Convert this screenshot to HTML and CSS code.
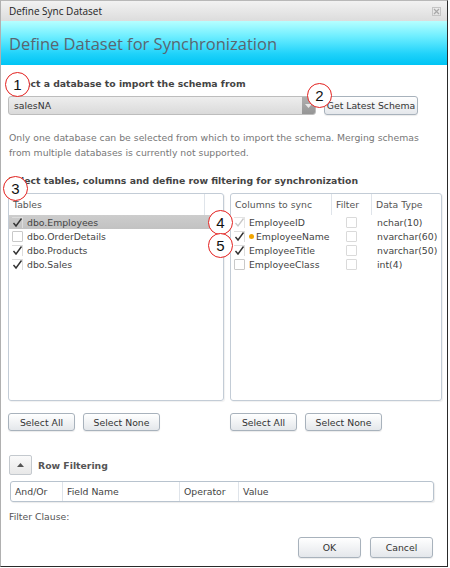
FILE: index.html
```html
<!DOCTYPE html>
<html>
<head>
<meta charset="utf-8">
<link rel="stylesheet" href="styles.css">
</head>
<body>
<div class="dialog">
  <div class="titlebar">
    <span class="title">Define Sync Dataset</span>
    <svg class="close" width="9" height="9" viewBox="0 0 9 9"><rect x="0.5" y="0.5" width="8" height="8" fill="none" stroke="#c4c4c4"/><path d="M2 2 L7 7 M7 2 L2 7" stroke="#a8a8a8" stroke-width="1.2"/></svg>
  </div>
  <div class="banner">Define Dataset for Synchronization</div>
  <div class="content">
    <div class="label l1">Select a database to import the schema from</div>
    <div class="db-row">
      <div class="select"><span class="select-text">salesNA</span><span class="arrow"><svg width="7" height="4" viewBox="0 0 7 4"><path d="M0 0 H7 L3.5 4 Z" fill="#e8e8e8"/></svg></span></div>
      <button class="btn schema-btn">Get Latest Schema</button>
    </div>
    <p class="desc">Only one database can be selected from which to import the schema. Merging schemas<br>from multiple databases is currently not supported.</p>
    <div class="label l2">Select tables, columns and define row filtering for synchronization</div>
    <div class="panels">
      <div class="panel">
        <div class="phead tables-head">
          <span class="hcell tcol">Tables</span>
          <span class="hcell tpad"></span>
        </div>
        <div class="prow selected"><span class="cb on"><svg width="11" height="11" viewBox="0 0 11 11"><path d="M1.5 6 L4 9 L9.5 1.5" fill="none" stroke="#333" stroke-width="1.4"/></svg></span><span class="rtext">dbo.Employees</span></div>
        <div class="prow"><span class="cb box"></span><span class="rtext">dbo.OrderDetails</span></div>
        <div class="prow"><span class="cb on"><svg width="11" height="11" viewBox="0 0 11 11"><path d="M1.5 6 L4 9 L9.5 1.5" fill="none" stroke="#333" stroke-width="1.4"/></svg></span><span class="rtext">dbo.Products</span></div>
        <div class="prow"><span class="cb on"><svg width="11" height="11" viewBox="0 0 11 11"><path d="M1.5 6 L4 9 L9.5 1.5" fill="none" stroke="#333" stroke-width="1.4"/></svg></span><span class="rtext">dbo.Sales</span></div>
      </div>
      <div class="panel">
        <div class="phead cols-head">
          <span class="hcell c1">Columns to sync</span>
          <span class="hcell c2">Filter</span>
          <span class="hcell c3">Data Type</span>
        </div>
        <div class="crow">
          <span class="c1 cell"><span class="cb on dis"><svg width="11" height="11" viewBox="0 0 11 11"><path d="M1.5 6 L4 9 L9.5 1.5" fill="none" stroke="#c8c8c8" stroke-width="1.3"/></svg></span><span class="rtext">EmployeeID</span></span>
          <span class="c2 cell"><span class="cb box light"></span></span>
          <span class="c3 cell">nchar(10)</span>
        </div>
        <div class="crow">
          <span class="c1 cell"><span class="cb on"><svg width="11" height="11" viewBox="0 0 11 11"><path d="M1.5 6 L4 9 L9.5 1.5" fill="none" stroke="#333" stroke-width="1.4"/></svg></span><span class="dot"></span><span class="rtext">EmployeeName</span></span>
          <span class="c2 cell"><span class="cb box light"></span></span>
          <span class="c3 cell">nvarchar(60)</span>
        </div>
        <div class="crow">
          <span class="c1 cell"><span class="cb on"><svg width="11" height="11" viewBox="0 0 11 11"><path d="M1.5 6 L4 9 L9.5 1.5" fill="none" stroke="#333" stroke-width="1.4"/></svg></span><span class="rtext">EmployeeTitle</span></span>
          <span class="c2 cell"><span class="cb box light"></span></span>
          <span class="c3 cell">nvarchar(50)</span>
        </div>
        <div class="crow">
          <span class="c1 cell"><span class="cb box"></span><span class="rtext">EmployeeClass</span></span>
          <span class="c2 cell"><span class="cb box light"></span></span>
          <span class="c3 cell">int(4)</span>
        </div>
      </div>
      <div class="btn-row">
        <button class="btn sel-all">Select All</button>
        <button class="btn sel-none">Select None</button>
      </div>
      <div class="btn-row">
        <button class="btn sel-all">Select All</button>
        <button class="btn sel-none">Select None</button>
      </div>
    </div>
    <div class="rf">
      <span class="toggle"><svg width="7" height="4" viewBox="0 0 7 4"><path d="M0 4 H7 L3.5 0 Z" fill="#555"/></svg></span>
      <span class="rf-label">Row Filtering</span>
    </div>
    <div class="fgrid">
      <span class="fcell f1">And/Or</span>
      <span class="fcell f2">Field Name</span>
      <span class="fcell f3">Operator</span>
      <span class="fcell f4">Value</span>
    </div>
    <div class="fclause">Filter Clause:</div>
    <div class="footer">
      <button class="btn fbtn">OK</button>
      <button class="btn fbtn">Cancel</button>
    </div>
  </div>
  <span class="callout k1">1</span>
  <span class="callout k2">2</span>
  <span class="callout k3">3</span>
  <span class="callout k4">4</span>
  <span class="callout k5">5</span>
</div>
</body>
</html>
```
FILE: styles.css
```css
* { box-sizing: border-box; }
html, body { margin: 0; padding: 0; background: #fff; }
body { font-family: "DejaVu Sans", Verdana, sans-serif; font-size: 9.3px; color: #444; }

.dialog {
  position: relative;
  width: 448px;
  height: 567px;
  border-left: 1px solid #b0b0b0;
  border-right: 1px solid #2a2a2a;
  border-bottom: 1px solid #2a2a2a;
  border-top: 1px solid #b8b8b8;
  background: #fff;
  overflow: hidden;
}

.titlebar {
  height: 20px;
  background: linear-gradient(#f2f2f2, #dcdcdc);
  display: flex;
  align-items: center;
  justify-content: space-between;
  padding: 0 6px 0 8px;
}
.title { font-family: "Open Sans", sans-serif; font-size: 10px; color: #222; }
.close { display: block; }

.banner {
  height: 44px;
  background: linear-gradient(#b6ffff 0%, #6eeeff 35%, #1fd2fa 75%, #00c4f4 100%);
  font-family: "Open Sans", sans-serif;
  font-size: 16.5px;
  color: #5a6670;
  padding-left: 8px;
  display: flex;
  align-items: center;
  padding-top: 1px;
}

.content { padding: 12px 5px 0 7px; }

.label { font-weight: bold; line-height: 14px; color: #444; }
.l2 { margin-top: 14px; }

.db-row { display: flex; margin-top: 5px; height: 19px; }
.select {
  width: 308px;
  height: 19px;
  border: 1px solid #bdbdbd;
  border-radius: 3px;
  background: linear-gradient(#eeeeee, #dadada);
  display: flex;
  align-items: center;
  justify-content: space-between;
  overflow: hidden;
}
.select-text { padding-left: 5px; color: #333; }
.arrow {
  width: 13px;
  height: 100%;
  background: linear-gradient(#b0b0b0, #959595);
  display: flex;
  align-items: center;
  justify-content: center;
}

.btn {
  font-family: "DejaVu Sans", Verdana, sans-serif;
  font-size: 9.3px;
  color: #333;
  border: 1px solid #a8b2bc;
  border-radius: 3px;
  background: linear-gradient(#ffffff, #e4e7eb);
  box-shadow: 0 1px 1px rgba(0,0,0,0.08);
  padding: 0;
  height: 19px;
}
.schema-btn { margin-left: 8px; width: 94px; }

.desc { margin: 15px 0 0 1px; line-height: 15px; color: #777; }

.panels {
  display: grid;
  grid-template-columns: 216px 212px;
  column-gap: 6px;
  margin-top: 5px;
}
.panel {
  height: 208px;
  border: 1px solid #c3ccd6;
  border-radius: 3px;
  box-shadow: 1px 1px 1px rgba(0,0,0,0.06);
  overflow: hidden;
}
.phead { display: flex; height: 21px; }
.hcell { display: flex; align-items: center; color: #555; padding-left: 4px; }
.tcol { width: 196px; border-right: 1px solid #dfe4ea; }
.tpad { flex: 1; }
.c1 { width: 101px; }
.c2 { width: 40px; }
.c3 { flex: 1; }
.cols-head .c1, .cols-head .c2 { border-right: 1px solid #dfe4ea; }

.prow { display: flex; align-items: center; height: 14px; padding-left: 3px; }
.prow.selected { background: linear-gradient(#cdcdcd, #c2c2c2); }
.prow .rtext { margin-left: 4px; color: #444; }

.cb { width: 11px; height: 11px; display: inline-flex; flex: none; }
.cb svg { overflow: visible; }
.cb.on { border-top: 1px solid #dcdcdc; border-right: 1px solid #dcdcdc; }
.cb.on svg { margin: -1px 0 0 0; }
.cb.on.dis { border-color: #e4e4e4; }
.cb.box { border: 1px solid #c9c9c9; background: #fff; border-radius: 1px; }
.cb.box.light { border-color: #dadada; }

.crow { display: flex; height: 14px; }
.cell { display: flex; align-items: center; color: #444; }
.crow .c1 { padding-left: 3px; }
.crow .c1 .rtext { margin-left: 4px; }
.crow .c2 { justify-content: center; padding-right: 2px; }
.crow .c3 { padding-left: 5px; }
.dot { width: 5px; height: 5px; border-radius: 50%; background: #f2a500; margin-left: 4px; margin-right: -2px; }

.btn-row { display: flex; gap: 8px; margin-top: 12px; }
.btn-row .btn { height: 18px; }
.sel-all { width: 67px; }
.sel-none { width: 77px; }

.rf { display: flex; align-items: center; margin-top: 24px; height: 20px; }
.toggle {
  width: 23px;
  height: 20px;
  border: 1px solid #c4c9ce;
  border-radius: 2px;
  background: linear-gradient(#fafafa, #e8e8e8);
  display: flex;
  align-items: center;
  justify-content: center;
  margin-left: 1px;
}
.rf-label { font-weight: bold; margin-left: 6px; color: #555; }

.fgrid {
  display: flex;
  margin: 6px 0 0 2px;
  width: 424px;
  height: 21px;
  border: 1px solid #b8c3ce;
  border-radius: 3px;
  box-shadow: 1px 1px 1px rgba(0,0,0,0.08);
}
.fcell { display: flex; align-items: center; padding-left: 4px; color: #444; border-right: 1px solid #dfe4ea; }
.f1 { width: 52px; }
.f2 { width: 117px; }
.f3 { width: 59px; }
.f4 { flex: 1; border-right: none; }

.fclause { margin: 8px 0 0 1px; line-height: 14px; color: #555; }

.footer { display: flex; justify-content: flex-end; gap: 9px; margin-top: 13px; padding-right: 9px; }
.fbtn { width: 63px; height: 21px; }

.callout {
  position: absolute;
  width: 25px;
  height: 25px;
  border: 1.5px solid #e3201e;
  border-radius: 50%;
  background: #fff;
  font-family: "Liberation Sans", Arial, sans-serif;
  font-size: 15px;
  color: #111;
  display: flex;
  align-items: center;
  justify-content: center;
}
.k1 { left: 4px; top: 71px; }
.k2 { left: 306px; top: 82px; }
.k3 { left: 2px; top: 175px; }
.k4 { left: 207px; top: 209px; }
.k5 { left: 207px; top: 232px; }
```
